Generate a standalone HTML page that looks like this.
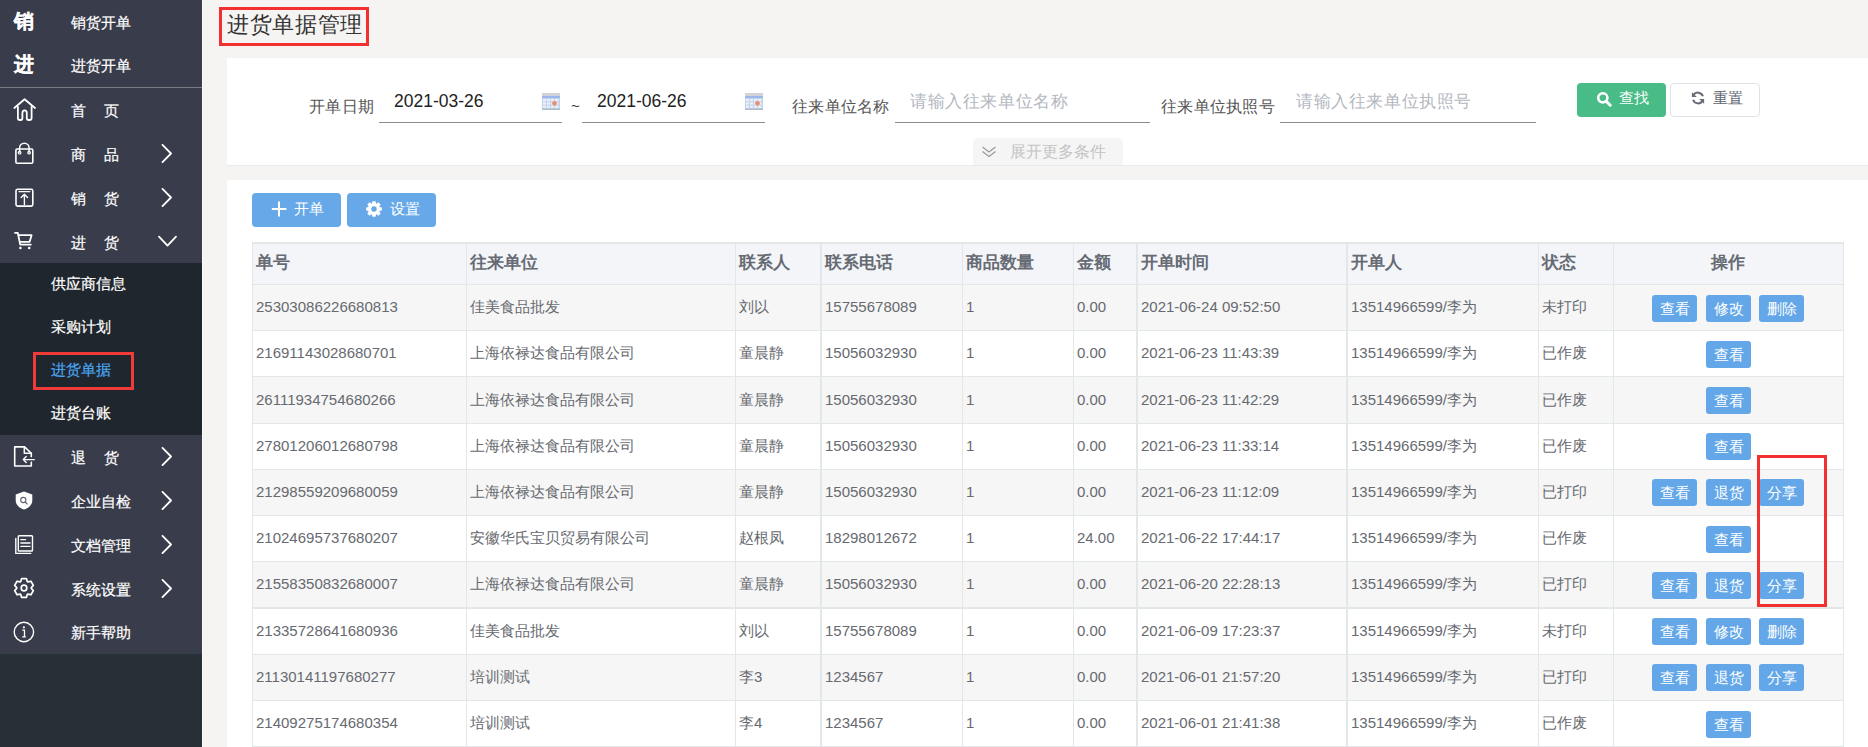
<!DOCTYPE html>
<html><head><meta charset="utf-8">
<style>
*{box-sizing:border-box;margin:0;padding:0}
html,body{width:1868px;height:747px;overflow:hidden}
body{font-family:"Liberation Sans",sans-serif;background:#f5f4f2;position:relative;color:#333}
.abs{position:absolute}
#side div{-webkit-text-stroke:0.2px currentColor}
#side{position:absolute;left:0;top:0;width:202px;height:747px;background:#263036}
#side .top{position:absolute;left:0;top:0;width:202px;height:87px;background:#393c4a}
#side .sep{position:absolute;left:0;top:87px;width:202px;height:1px;background:#7a7c84}
#side .menu{position:absolute;left:0;top:88px;width:202px;height:566px;background:#393c4a}
#side .sub{position:absolute;left:0;top:263px;width:202px;height:172px;background:#20262d}
.mi{position:absolute;left:0;width:202px;height:44px;color:#fff;font-size:15px}
.mi .t{position:absolute;left:71px;top:0;line-height:44px;white-space:nowrap}
.mi .t2{letter-spacing:18px}
.mi svg.ic{position:absolute;left:11px;top:10px;width:26px;height:26px}
.mi svg.ch{position:absolute;left:158px;top:13px;width:18px;height:18px}
.smi{position:absolute;left:51px;color:#fff;font-size:15px;line-height:43px;height:43px}

.panel{position:absolute;background:#fff}
.lbl{position:absolute;font-size:16px;letter-spacing:0.3px;color:#555;line-height:20px;white-space:nowrap}
.uline{position:absolute;height:1px;background:#8c8c8c}
.val{position:absolute;font-size:17.5px;color:#222;line-height:20px;white-space:nowrap}
.ph{position:absolute;font-size:17px;letter-spacing:0.6px;color:#b4b8bf;line-height:20px;white-space:nowrap}
.btn{position:absolute;border-radius:4px;color:#fff;font-size:15px}
.bt{position:absolute;line-height:20px;white-space:nowrap;color:#fff;font-size:15px}
.th{position:absolute;font-size:17px;font-weight:bold;color:#666b73;line-height:20px;white-space:nowrap}
.td{position:absolute;font-size:15px;color:#676a70;line-height:20px;white-space:nowrap}
.ob{position:absolute;width:45px;height:27px;background:#64a7e8;border-radius:3px;color:#fff;font-size:15px;line-height:27px;text-align:center}
</style></head><body>
<div id="side">
  <div class="top"></div>
  <div class="sep"></div>
  <div class="menu"></div>
  <div class="sub"></div>
<div class="abs" style="left:14px;top:9px;font-size:20px;font-weight:bold;color:#fff;line-height:24px">销</div>
<div class="abs" style="left:71px;top:13px;font-size:15px;color:#fff;line-height:20px">销货开单</div>
<div class="abs" style="left:14px;top:52px;font-size:20px;font-weight:bold;color:#fff;line-height:24px">进</div>
<div class="abs" style="left:71px;top:56px;font-size:15px;color:#fff;line-height:20px">进货开单</div>
<div class="abs" style="left:71px;top:101px;font-size:15px;color:#fff;line-height:20px;white-space:nowrap;letter-spacing:18px;">首页</div>
<div class="abs" style="left:71px;top:145px;font-size:15px;color:#fff;line-height:20px;white-space:nowrap;letter-spacing:18px;">商品</div>
<svg class="abs" style="left:158px;top:144px" width="18" height="19" viewBox="0 0 18 19"><path d="M4.5,0.9 L13,9.5 L4.5,18.1" stroke="#fff" fill="none" stroke-width="1.8" stroke-linecap="round" stroke-linejoin="round" stroke-width="1.6"/></svg>
<div class="abs" style="left:71px;top:189px;font-size:15px;color:#fff;line-height:20px;white-space:nowrap;letter-spacing:18px;">销货</div>
<svg class="abs" style="left:158px;top:188px" width="18" height="19" viewBox="0 0 18 19"><path d="M4.5,0.9 L13,9.5 L4.5,18.1" stroke="#fff" fill="none" stroke-width="1.8" stroke-linecap="round" stroke-linejoin="round" stroke-width="1.6"/></svg>
<div class="abs" style="left:71px;top:233px;font-size:15px;color:#fff;line-height:20px;white-space:nowrap;letter-spacing:18px;">进货</div>
<svg class="abs" style="left:158px;top:232px" width="19" height="18" viewBox="0 0 19 18"><path d="M1,4.6 L9.5,13.6 L18,4.6" stroke="#fff" fill="none" stroke-width="1.8" stroke-linecap="round" stroke-linejoin="round" stroke-width="1.6"/></svg>
<div class="abs" style="left:51px;top:274px;font-size:15px;color:#fff;line-height:20px;white-space:nowrap;">供应商信息</div>
<div class="abs" style="left:51px;top:317px;font-size:15px;color:#fff;line-height:20px;white-space:nowrap;">采购计划</div>
<div class="abs" style="left:33px;top:352px;width:101px;height:38px;border:3px solid #f33a3a"></div>
<div class="abs" style="left:51px;top:360px;font-size:15px;color:#4aa6f2;line-height:20px;white-space:nowrap;">进货单据</div>
<div class="abs" style="left:51px;top:403px;font-size:15px;color:#fff;line-height:20px;white-space:nowrap;">进货台账</div>
<div class="abs" style="left:71px;top:448px;font-size:15px;color:#fff;line-height:20px;white-space:nowrap;letter-spacing:18px;">退货</div>
<svg class="abs" style="left:158px;top:447px" width="18" height="19" viewBox="0 0 18 19"><path d="M4.5,0.9 L13,9.5 L4.5,18.1" stroke="#fff" fill="none" stroke-width="1.8" stroke-linecap="round" stroke-linejoin="round" stroke-width="1.6"/></svg>
<div class="abs" style="left:71px;top:492px;font-size:15px;color:#fff;line-height:20px;white-space:nowrap;">企业自检</div>
<svg class="abs" style="left:158px;top:491px" width="18" height="19" viewBox="0 0 18 19"><path d="M4.5,0.9 L13,9.5 L4.5,18.1" stroke="#fff" fill="none" stroke-width="1.8" stroke-linecap="round" stroke-linejoin="round" stroke-width="1.6"/></svg>
<div class="abs" style="left:71px;top:536px;font-size:15px;color:#fff;line-height:20px;white-space:nowrap;">文档管理</div>
<svg class="abs" style="left:158px;top:535px" width="18" height="19" viewBox="0 0 18 19"><path d="M4.5,0.9 L13,9.5 L4.5,18.1" stroke="#fff" fill="none" stroke-width="1.8" stroke-linecap="round" stroke-linejoin="round" stroke-width="1.6"/></svg>
<div class="abs" style="left:71px;top:580px;font-size:15px;color:#fff;line-height:20px;white-space:nowrap;">系统设置</div>
<svg class="abs" style="left:158px;top:579px" width="18" height="19" viewBox="0 0 18 19"><path d="M4.5,0.9 L13,9.5 L4.5,18.1" stroke="#fff" fill="none" stroke-width="1.8" stroke-linecap="round" stroke-linejoin="round" stroke-width="1.6"/></svg>
<div class="abs" style="left:71px;top:623px;font-size:15px;color:#fff;line-height:20px;white-space:nowrap;">新手帮助</div>
<svg class="abs" style="left:12px;top:97px" width="26" height="26" viewBox="0 0 26 26"><path d="M2.3,11 L12.6,2.2 L23,11" stroke="#fff" fill="none" stroke-width="1.8" stroke-linecap="round" stroke-linejoin="round"/><path d="M5.9,10 V21 Q5.9,23 7.9,23 H8.7 Q10.4,23 10.4,21 V16 Q10.4,13.3 12.6,13.3 Q14.8,13.3 14.8,16 V21 Q14.8,23 16.5,23 H17.6 Q19.6,23 19.6,21 V10" stroke="#fff" fill="none" stroke-width="1.8" stroke-linecap="round" stroke-linejoin="round"/></svg>
<svg class="abs" style="left:12px;top:140px" width="26" height="26" viewBox="0 0 26 26"><rect x="3.9" y="9" width="16.9" height="14.3" rx="1.2" stroke="#fff" fill="none" stroke-linecap="round" stroke-linejoin="round" stroke-width="1.6"/><path d="M7.6,12 V8 A4.75,4.75 0 0 1 17.1,8 V12" stroke="#fff" fill="none" stroke-linecap="round" stroke-linejoin="round" stroke-width="1.5"/><circle cx="7.6" cy="12.7" r="1.3" stroke="#fff" fill="none" stroke-linecap="round" stroke-linejoin="round" stroke-width="1.2"/><circle cx="17.1" cy="12.7" r="1.3" stroke="#fff" fill="none" stroke-linecap="round" stroke-linejoin="round" stroke-width="1.2"/></svg>
<svg class="abs" style="left:12px;top:184px" width="26" height="26" viewBox="0 0 26 26"><rect x="4" y="5.3" width="16.8" height="16.8" rx="1.6" stroke="#fff" fill="none" stroke-linecap="round" stroke-linejoin="round" stroke-width="1.6"/><path d="M7,7.6 H17.8" stroke="#fff" fill="none" stroke-linecap="round" stroke-linejoin="round" stroke-width="1.3"/><path d="M12.4,20.5 V10.2 M9.2,13.4 L12.4,10.2 L15.6,13.4" stroke="#fff" fill="none" stroke-linecap="round" stroke-linejoin="round" stroke-width="1.4"/></svg>
<svg class="abs" style="left:12px;top:228px" width="26" height="26" viewBox="0 0 26 26"><path d="M3,4.8 H5.8 L8.2,16.6 H18.8" stroke="#fff" fill="none" stroke-width="1.8" stroke-linecap="round" stroke-linejoin="round" stroke-width="1.7"/><path d="M6.6,7.2 H19.6 L17.6,13.8 H8" stroke="#fff" fill="none" stroke-width="1.8" stroke-linecap="round" stroke-linejoin="round" stroke-width="1.7"/><circle cx="8.4" cy="20" r="1.3" fill="#fff"/><circle cx="17.2" cy="20" r="1.3" fill="#fff"/></svg>
<svg class="abs" style="left:12px;top:443px" width="26" height="26" viewBox="0 0 26 26"><path d="M19.3,13.6 V10.4 L12.6,3.9 H2.7 V23 H19.3 V19.4" stroke="#fff" fill="none" stroke-linecap="round" stroke-linejoin="round" stroke-width="1.6" stroke-linecap="butt" stroke-linejoin="miter"/><path d="M12.3,3.9 V10.3 H19.3" stroke="#fff" fill="none" stroke-linecap="round" stroke-linejoin="round" stroke-width="1.5"/><path d="M22.3,16.6 H11.4 M14.2,13.6 L11.3,16.6 L14.2,19.6" stroke="#fff" fill="none" stroke-linecap="round" stroke-linejoin="round" stroke-width="1.4"/></svg>
<svg class="abs" style="left:12px;top:488px" width="26" height="26" viewBox="0 0 26 26"><path d="M12,3.4 L20.3,6.4 V12.5 C20.3,16.8 16.8,20 12,21.6 C7.2,20 3.7,16.8 3.7,12.5 V6.4 Z" fill="#fff"/><circle cx="11.3" cy="12" r="2.6" fill="none" stroke="#5d6170" stroke-width="1.1"/><path d="M13.2,14 L15.2,16" stroke="#5d6170" stroke-width="1.1" stroke-linecap="round"/></svg>
<svg class="abs" style="left:12px;top:532px" width="26" height="26" viewBox="0 0 26 26"><rect x="6.3" y="3.8" width="14.2" height="15.2" rx="0.8" stroke="#fff" fill="none" stroke-linecap="round" stroke-linejoin="round" stroke-width="1.4"/><path d="M3.8,6.4 V21.4 H18.8" stroke="#fff" fill="none" stroke-linecap="round" stroke-linejoin="round" stroke-width="1.4"/><path d="M8.8,7.6 H13.6 M8.8,11 H18 M8.8,14.3 H18" stroke="#fff" fill="none" stroke-linecap="round" stroke-linejoin="round" stroke-width="1.3"/></svg>
<svg class="abs" style="left:12px;top:576.3px" width="26" height="26" viewBox="0 0 26 26"><path d="M8.76,5.46 L9.60,2.60 L14.40,2.60 L15.24,5.46 L16.04,5.92 L18.94,5.22 L21.34,9.38 L19.29,11.54 L19.29,12.46 L21.34,14.62 L18.94,18.78 L16.04,18.08 L15.24,18.54 L14.40,21.40 L9.60,21.40 L8.76,18.54 L7.96,18.08 L5.06,18.78 L2.66,14.62 L4.71,12.46 L4.71,11.54 L2.66,9.38 L5.06,5.22 L7.96,5.92Z" stroke="#fff" fill="none" stroke-linecap="round" stroke-linejoin="round" stroke-width="1.7"/><circle cx="12" cy="12" r="2.8" stroke="#fff" fill="none" stroke-linecap="round" stroke-linejoin="round" stroke-width="1.7"/></svg>
<svg class="abs" style="left:12px;top:619.5px" width="26" height="26" viewBox="0 0 26 26"><circle cx="11.9" cy="12" r="9.7" stroke="#fff" fill="none" stroke-width="1.4"/><circle cx="11.9" cy="7.3" r="1.1" fill="#fff"/><path d="M10.3,10.2 H12.5 V16.8 M10.2,16.9 H13.9" stroke="#fff" fill="none" stroke-width="1.3"/></svg>
</div>
<div class="abs" style="left:219px;top:7px;width:150px;height:39px;border:3px solid #f23030"></div>
<div class="abs" style="left:227px;top:12px;font-size:22px;letter-spacing:0.7px;color:#333;line-height:26px;white-space:nowrap">进货单据管理</div>
<div class="panel" style="left:227px;top:58px;width:1641px;height:107px"></div>
<div class="lbl" style="left:309px;top:96.5px">开单日期</div>
<div class="uline" style="left:379px;top:122px;width:183px"></div>
<div class="val" style="left:394px;top:91px">2021-03-26</div>
<div class="abs" style="left:542px;top:93px;width:18px;height:17px"><svg width="18" height="17" viewBox="0 0 18 17"><rect x="0" y="0" width="18" height="2.8" fill="#d3d3d3"/><rect x="0" y="2.8" width="18" height="2.2" fill="#9bb8ee"/><rect x="0" y="5" width="18" height="11" fill="#c3d3ea"/><g fill="#e9f0fa"><rect x="1" y="6" width="3" height="2.3"/><rect x="5" y="6" width="3" height="2.3"/><rect x="9" y="6" width="3" height="2.3"/><rect x="13" y="6" width="3.5" height="2.3"/><rect x="1" y="9.3" width="3" height="2.3"/><rect x="5" y="9.3" width="3" height="2.3"/><rect x="9" y="9.3" width="3" height="2.3"/><rect x="13" y="9.3" width="3.5" height="2.3"/><rect x="1" y="12.6" width="3" height="2.3"/><rect x="5" y="12.6" width="3" height="2.3"/><rect x="9" y="12.6" width="3" height="2.3"/><rect x="13" y="12.6" width="3.5" height="2.3"/></g><circle cx="12.5" cy="10.3" r="2.4" fill="#eb8f73"/><rect x="0" y="15.6" width="18" height="1.4" fill="#b0bccb"/></svg></div>
<div class="abs" style="left:571px;top:96px;font-size:15px;color:#333;line-height:20px">~</div>
<div class="uline" style="left:582px;top:122px;width:183px"></div>
<div class="val" style="left:597px;top:91px">2021-06-26</div>
<div class="abs" style="left:745px;top:93px;width:18px;height:17px"><svg width="18" height="17" viewBox="0 0 18 17"><rect x="0" y="0" width="18" height="2.8" fill="#d3d3d3"/><rect x="0" y="2.8" width="18" height="2.2" fill="#9bb8ee"/><rect x="0" y="5" width="18" height="11" fill="#c3d3ea"/><g fill="#e9f0fa"><rect x="1" y="6" width="3" height="2.3"/><rect x="5" y="6" width="3" height="2.3"/><rect x="9" y="6" width="3" height="2.3"/><rect x="13" y="6" width="3.5" height="2.3"/><rect x="1" y="9.3" width="3" height="2.3"/><rect x="5" y="9.3" width="3" height="2.3"/><rect x="9" y="9.3" width="3" height="2.3"/><rect x="13" y="9.3" width="3.5" height="2.3"/><rect x="1" y="12.6" width="3" height="2.3"/><rect x="5" y="12.6" width="3" height="2.3"/><rect x="9" y="12.6" width="3" height="2.3"/><rect x="13" y="12.6" width="3.5" height="2.3"/></g><circle cx="12.5" cy="10.3" r="2.4" fill="#eb8f73"/><rect x="0" y="15.6" width="18" height="1.4" fill="#b0bccb"/></svg></div>
<div class="lbl" style="left:792px;top:96.5px">往来单位名称</div>
<div class="uline" style="left:895px;top:122px;width:255px"></div>
<div class="ph" style="left:910px;top:92px">请输入往来单位名称</div>
<div class="lbl" style="left:1161px;top:96.5px">往来单位执照号</div>
<div class="uline" style="left:1280px;top:122px;width:256px"></div>
<div class="ph" style="left:1296px;top:92px">请输入往来单位执照号</div>
<div class="btn" style="left:1577px;top:83px;width:89px;height:34px;background:#48bb87"></div>
<svg class="abs" style="left:1596px;top:91px" width="17" height="16" viewBox="0 0 17 16"><circle cx="6.8" cy="6.8" r="4.6" fill="none" stroke="#fff" stroke-width="2.6"/><path d="M10.2,10.2 L14.2,14.2" stroke="#fff" stroke-width="3" stroke-linecap="round"/></svg>
<div class="bt" style="left:1619px;top:88px;color:#fff;font-size:15px">查找</div>
<div class="btn" style="left:1670px;top:83px;width:90px;height:34px;background:#fff;border:1px solid #dfe3e8"></div>
<svg class="abs" style="left:1690px;top:90px" width="16" height="16" viewBox="0 0 16 16"><path d="M12.9,6.2 A5.3,5.3 0 0 0 3.4,5.1" fill="none" stroke="#666c75" stroke-width="2"/><path d="M1.9,2.2 L1.9,7.1 L6.8,7.1 Z" fill="#666c75"/><path d="M3.1,9.8 A5.3,5.3 0 0 0 12.6,10.9" fill="none" stroke="#666c75" stroke-width="2"/><path d="M14.1,13.8 L14.1,8.9 L9.2,8.9 Z" fill="#666c75"/></svg>
<div class="bt" style="left:1713px;top:88px;color:#5f6670;font-size:15px">重置</div>
<div class="abs" style="left:973px;top:138px;width:150px;height:27px;background:#f5f5f5;border-radius:6px 6px 0 0"></div>
<svg class="abs" style="left:981px;top:145px" width="16" height="13" viewBox="0 0 16 13"><path d="M1.5,2 L8,7 L14.5,2 M1.5,6.5 L8,11.5 L14.5,6.5" fill="none" stroke="#9a9a9a" stroke-width="1.3"/></svg>
<div class="abs" style="left:1010px;top:142px;font-size:16px;color:#c4c4c4;line-height:20px;white-space:nowrap">展开更多条件</div>
<div class="panel" style="left:227px;top:180px;width:1641px;height:600px"></div>
<div class="btn" style="left:252px;top:193px;width:89px;height:34px;background:#66a8e8"></div>
<svg class="abs" style="left:271px;top:201px" width="16" height="16" viewBox="0 0 16 16"><path d="M8,0.5 V15.5 M0.8,8 H15.4" stroke="#fff" stroke-width="2"/></svg>
<div class="bt" style="left:294px;top:199px">开单</div>
<div class="btn" style="left:347px;top:193px;width:89px;height:34px;background:#66a8e8"></div>
<svg class="abs" style="left:366px;top:200.5px" width="16" height="16" viewBox="0 0 16 16"><path d="M13.52,5.92 L15.84,6.41 L15.84,9.59 L13.52,10.08 L13.37,10.43 L14.67,12.42 L12.42,14.67 L10.43,13.37 L10.08,13.52 L9.59,15.84 L6.41,15.84 L5.92,13.52 L5.57,13.37 L3.58,14.67 L1.33,12.42 L2.63,10.43 L2.48,10.08 L0.16,9.59 L0.16,6.41 L2.48,5.92 L2.63,5.57 L1.33,3.58 L3.58,1.33 L5.57,2.63 L5.92,2.48 L6.41,0.16 L9.59,0.16 L10.08,2.48 L10.43,2.63 L12.42,1.33 L14.67,3.58 L13.37,5.57Z M8,5.3 A2.7,2.7 0 1 0 8,10.7 A2.7,2.7 0 1 0 8,5.3Z" fill="#fff" fill-rule="evenodd"/></svg>
<div class="bt" style="left:390px;top:199px">设置</div>
<div class="abs" style="left:202px;top:0;width:1px;height:747px;background:#fbfbfa"></div>
<div class="abs" style="left:227px;top:165px;width:1641px;height:1px;background:#ebeae8"></div>
<!--TABLE-->
<div class="abs" style="left:252px;top:242px;width:1592px;height:42px;background:#f3f5f9;border-top:2px solid #e2e7ea"></div>
<div class="abs" style="left:252px;top:284.00px;width:1592px;height:46.21px;background:#f6f6f6"></div>
<div class="abs" style="left:252px;top:330.21px;width:1592px;height:46.21px;background:#fff"></div>
<div class="abs" style="left:252px;top:376.42px;width:1592px;height:46.21px;background:#f6f6f6"></div>
<div class="abs" style="left:252px;top:422.63px;width:1592px;height:46.21px;background:#fff"></div>
<div class="abs" style="left:252px;top:468.84px;width:1592px;height:46.21px;background:#f6f6f6"></div>
<div class="abs" style="left:252px;top:515.05px;width:1592px;height:46.21px;background:#fff"></div>
<div class="abs" style="left:252px;top:561.26px;width:1592px;height:46.21px;background:#f6f6f6"></div>
<div class="abs" style="left:252px;top:607.47px;width:1592px;height:46.21px;background:#fff"></div>
<div class="abs" style="left:252px;top:653.68px;width:1592px;height:46.21px;background:#f6f6f6"></div>
<div class="abs" style="left:252px;top:699.89px;width:1592px;height:46.21px;background:#fff"></div>
<div class="abs" style="left:252px;top:284px;width:1592px;height:1px;background:#e2e7ea"></div>
<div class="abs" style="left:252px;top:330px;width:1592px;height:1px;background:#e2e7ea"></div>
<div class="abs" style="left:252px;top:376px;width:1592px;height:1px;background:#e2e7ea"></div>
<div class="abs" style="left:252px;top:423px;width:1592px;height:1px;background:#e2e7ea"></div>
<div class="abs" style="left:252px;top:469px;width:1592px;height:1px;background:#e2e7ea"></div>
<div class="abs" style="left:252px;top:515px;width:1592px;height:1px;background:#e2e7ea"></div>
<div class="abs" style="left:252px;top:561px;width:1592px;height:1px;background:#e2e7ea"></div>
<div class="abs" style="left:252px;top:607px;width:1592px;height:2px;background:#e2e7ea"></div>
<div class="abs" style="left:252px;top:654px;width:1592px;height:1px;background:#e2e7ea"></div>
<div class="abs" style="left:252px;top:700px;width:1592px;height:1px;background:#e2e7ea"></div>
<div class="abs" style="left:252px;top:746px;width:1592px;height:1px;background:#e2e7ea"></div>
<div class="abs" style="left:252px;top:242px;width:1px;height:510px;background:#e2e7ea"></div>
<div class="abs" style="left:466px;top:242px;width:1px;height:510px;background:#e2e7ea"></div>
<div class="abs" style="left:735px;top:242px;width:1px;height:510px;background:#e2e7ea"></div>
<div class="abs" style="left:820px;top:242px;width:2px;height:510px;background:#e2e7ea"></div>
<div class="abs" style="left:962px;top:242px;width:1px;height:510px;background:#e2e7ea"></div>
<div class="abs" style="left:1073px;top:242px;width:1px;height:510px;background:#e2e7ea"></div>
<div class="abs" style="left:1136px;top:242px;width:2px;height:510px;background:#e2e7ea"></div>
<div class="abs" style="left:1346px;top:242px;width:2px;height:510px;background:#e2e7ea"></div>
<div class="abs" style="left:1538px;top:242px;width:1px;height:510px;background:#e2e7ea"></div>
<div class="abs" style="left:1613px;top:242px;width:1px;height:510px;background:#e2e7ea"></div>
<div class="abs" style="left:1843px;top:242px;width:1px;height:510px;background:#e2e7ea"></div>
<div class="th" style="left:256px;top:253px">单号</div>
<div class="th" style="left:470px;top:253px">往来单位</div>
<div class="th" style="left:739px;top:253px">联系人</div>
<div class="th" style="left:825px;top:253px">联系电话</div>
<div class="th" style="left:966px;top:253px">商品数量</div>
<div class="th" style="left:1077px;top:253px">金额</div>
<div class="th" style="left:1141px;top:253px">开单时间</div>
<div class="th" style="left:1351px;top:253px">开单人</div>
<div class="th" style="left:1542px;top:253px">状态</div>
<div class="th" style="left:1613px;width:230px;text-align:center;top:253px">操作</div>
<div class="td" style="left:256px;top:297.11px">25303086226680813</div>
<div class="td" style="left:470px;top:297.11px">佳美食品批发</div>
<div class="td" style="left:739px;top:297.11px">刘以</div>
<div class="td" style="left:825px;top:297.11px">15755678089</div>
<div class="td" style="left:966px;top:297.11px">1</div>
<div class="td" style="left:1077px;top:297.11px">0.00</div>
<div class="td" style="left:1141px;top:297.11px">2021-06-24 09:52:50</div>
<div class="td" style="left:1351px;top:297.11px">13514966599/李为</div>
<div class="td" style="left:1542px;top:297.11px">未打印</div>
<div class="ob" style="left:1652px;top:294.61px">查看</div>
<div class="ob" style="left:1706px;top:294.61px">修改</div>
<div class="ob" style="left:1759px;top:294.61px">删除</div>
<div class="td" style="left:256px;top:343.31px">21691143028680701</div>
<div class="td" style="left:470px;top:343.31px">上海依禄达食品有限公司</div>
<div class="td" style="left:739px;top:343.31px">童晨静</div>
<div class="td" style="left:825px;top:343.31px">15056032930</div>
<div class="td" style="left:966px;top:343.31px">1</div>
<div class="td" style="left:1077px;top:343.31px">0.00</div>
<div class="td" style="left:1141px;top:343.31px">2021-06-23 11:43:39</div>
<div class="td" style="left:1351px;top:343.31px">13514966599/李为</div>
<div class="td" style="left:1542px;top:343.31px">已作废</div>
<div class="ob" style="left:1706px;top:340.81px">查看</div>
<div class="td" style="left:256px;top:389.52px">26111934754680266</div>
<div class="td" style="left:470px;top:389.52px">上海依禄达食品有限公司</div>
<div class="td" style="left:739px;top:389.52px">童晨静</div>
<div class="td" style="left:825px;top:389.52px">15056032930</div>
<div class="td" style="left:966px;top:389.52px">1</div>
<div class="td" style="left:1077px;top:389.52px">0.00</div>
<div class="td" style="left:1141px;top:389.52px">2021-06-23 11:42:29</div>
<div class="td" style="left:1351px;top:389.52px">13514966599/李为</div>
<div class="td" style="left:1542px;top:389.52px">已作废</div>
<div class="ob" style="left:1706px;top:387.02px">查看</div>
<div class="td" style="left:256px;top:435.74px">27801206012680798</div>
<div class="td" style="left:470px;top:435.74px">上海依禄达食品有限公司</div>
<div class="td" style="left:739px;top:435.74px">童晨静</div>
<div class="td" style="left:825px;top:435.74px">15056032930</div>
<div class="td" style="left:966px;top:435.74px">1</div>
<div class="td" style="left:1077px;top:435.74px">0.00</div>
<div class="td" style="left:1141px;top:435.74px">2021-06-23 11:33:14</div>
<div class="td" style="left:1351px;top:435.74px">13514966599/李为</div>
<div class="td" style="left:1542px;top:435.74px">已作废</div>
<div class="ob" style="left:1706px;top:433.24px">查看</div>
<div class="td" style="left:256px;top:481.94px">21298559209680059</div>
<div class="td" style="left:470px;top:481.94px">上海依禄达食品有限公司</div>
<div class="td" style="left:739px;top:481.94px">童晨静</div>
<div class="td" style="left:825px;top:481.94px">15056032930</div>
<div class="td" style="left:966px;top:481.94px">1</div>
<div class="td" style="left:1077px;top:481.94px">0.00</div>
<div class="td" style="left:1141px;top:481.94px">2021-06-23 11:12:09</div>
<div class="td" style="left:1351px;top:481.94px">13514966599/李为</div>
<div class="td" style="left:1542px;top:481.94px">已打印</div>
<div class="ob" style="left:1652px;top:479.44px">查看</div>
<div class="ob" style="left:1706px;top:479.44px">退货</div>
<div class="ob" style="left:1759px;top:479.44px">分享</div>
<div class="td" style="left:256px;top:528.15px">21024695737680207</div>
<div class="td" style="left:470px;top:528.15px">安徽华氏宝贝贸易有限公司</div>
<div class="td" style="left:739px;top:528.15px">赵根凤</div>
<div class="td" style="left:825px;top:528.15px">18298012672</div>
<div class="td" style="left:966px;top:528.15px">1</div>
<div class="td" style="left:1077px;top:528.15px">24.00</div>
<div class="td" style="left:1141px;top:528.15px">2021-06-22 17:44:17</div>
<div class="td" style="left:1351px;top:528.15px">13514966599/李为</div>
<div class="td" style="left:1542px;top:528.15px">已作废</div>
<div class="ob" style="left:1706px;top:525.65px">查看</div>
<div class="td" style="left:256px;top:574.37px">21558350832680007</div>
<div class="td" style="left:470px;top:574.37px">上海依禄达食品有限公司</div>
<div class="td" style="left:739px;top:574.37px">童晨静</div>
<div class="td" style="left:825px;top:574.37px">15056032930</div>
<div class="td" style="left:966px;top:574.37px">1</div>
<div class="td" style="left:1077px;top:574.37px">0.00</div>
<div class="td" style="left:1141px;top:574.37px">2021-06-20 22:28:13</div>
<div class="td" style="left:1351px;top:574.37px">13514966599/李为</div>
<div class="td" style="left:1542px;top:574.37px">已打印</div>
<div class="ob" style="left:1652px;top:571.87px">查看</div>
<div class="ob" style="left:1706px;top:571.87px">退货</div>
<div class="ob" style="left:1759px;top:571.87px">分享</div>
<div class="td" style="left:256px;top:620.58px">21335728641680936</div>
<div class="td" style="left:470px;top:620.58px">佳美食品批发</div>
<div class="td" style="left:739px;top:620.58px">刘以</div>
<div class="td" style="left:825px;top:620.58px">15755678089</div>
<div class="td" style="left:966px;top:620.58px">1</div>
<div class="td" style="left:1077px;top:620.58px">0.00</div>
<div class="td" style="left:1141px;top:620.58px">2021-06-09 17:23:37</div>
<div class="td" style="left:1351px;top:620.58px">13514966599/李为</div>
<div class="td" style="left:1542px;top:620.58px">未打印</div>
<div class="ob" style="left:1652px;top:618.08px">查看</div>
<div class="ob" style="left:1706px;top:618.08px">修改</div>
<div class="ob" style="left:1759px;top:618.08px">删除</div>
<div class="td" style="left:256px;top:666.79px">21130141197680277</div>
<div class="td" style="left:470px;top:666.79px">培训测试</div>
<div class="td" style="left:739px;top:666.79px">李3</div>
<div class="td" style="left:825px;top:666.79px">1234567</div>
<div class="td" style="left:966px;top:666.79px">1</div>
<div class="td" style="left:1077px;top:666.79px">0.00</div>
<div class="td" style="left:1141px;top:666.79px">2021-06-01 21:57:20</div>
<div class="td" style="left:1351px;top:666.79px">13514966599/李为</div>
<div class="td" style="left:1542px;top:666.79px">已打印</div>
<div class="ob" style="left:1652px;top:664.29px">查看</div>
<div class="ob" style="left:1706px;top:664.29px">退货</div>
<div class="ob" style="left:1759px;top:664.29px">分享</div>
<div class="td" style="left:256px;top:713.00px">21409275174680354</div>
<div class="td" style="left:470px;top:713.00px">培训测试</div>
<div class="td" style="left:739px;top:713.00px">李4</div>
<div class="td" style="left:825px;top:713.00px">1234567</div>
<div class="td" style="left:966px;top:713.00px">1</div>
<div class="td" style="left:1077px;top:713.00px">0.00</div>
<div class="td" style="left:1141px;top:713.00px">2021-06-01 21:41:38</div>
<div class="td" style="left:1351px;top:713.00px">13514966599/李为</div>
<div class="td" style="left:1542px;top:713.00px">已作废</div>
<div class="ob" style="left:1706px;top:710.50px">查看</div>
<div class="abs" style="left:1757px;top:455px;width:70px;height:152px;border:3px solid #f23030"></div>
<!--/TABLE-->
</body></html>
